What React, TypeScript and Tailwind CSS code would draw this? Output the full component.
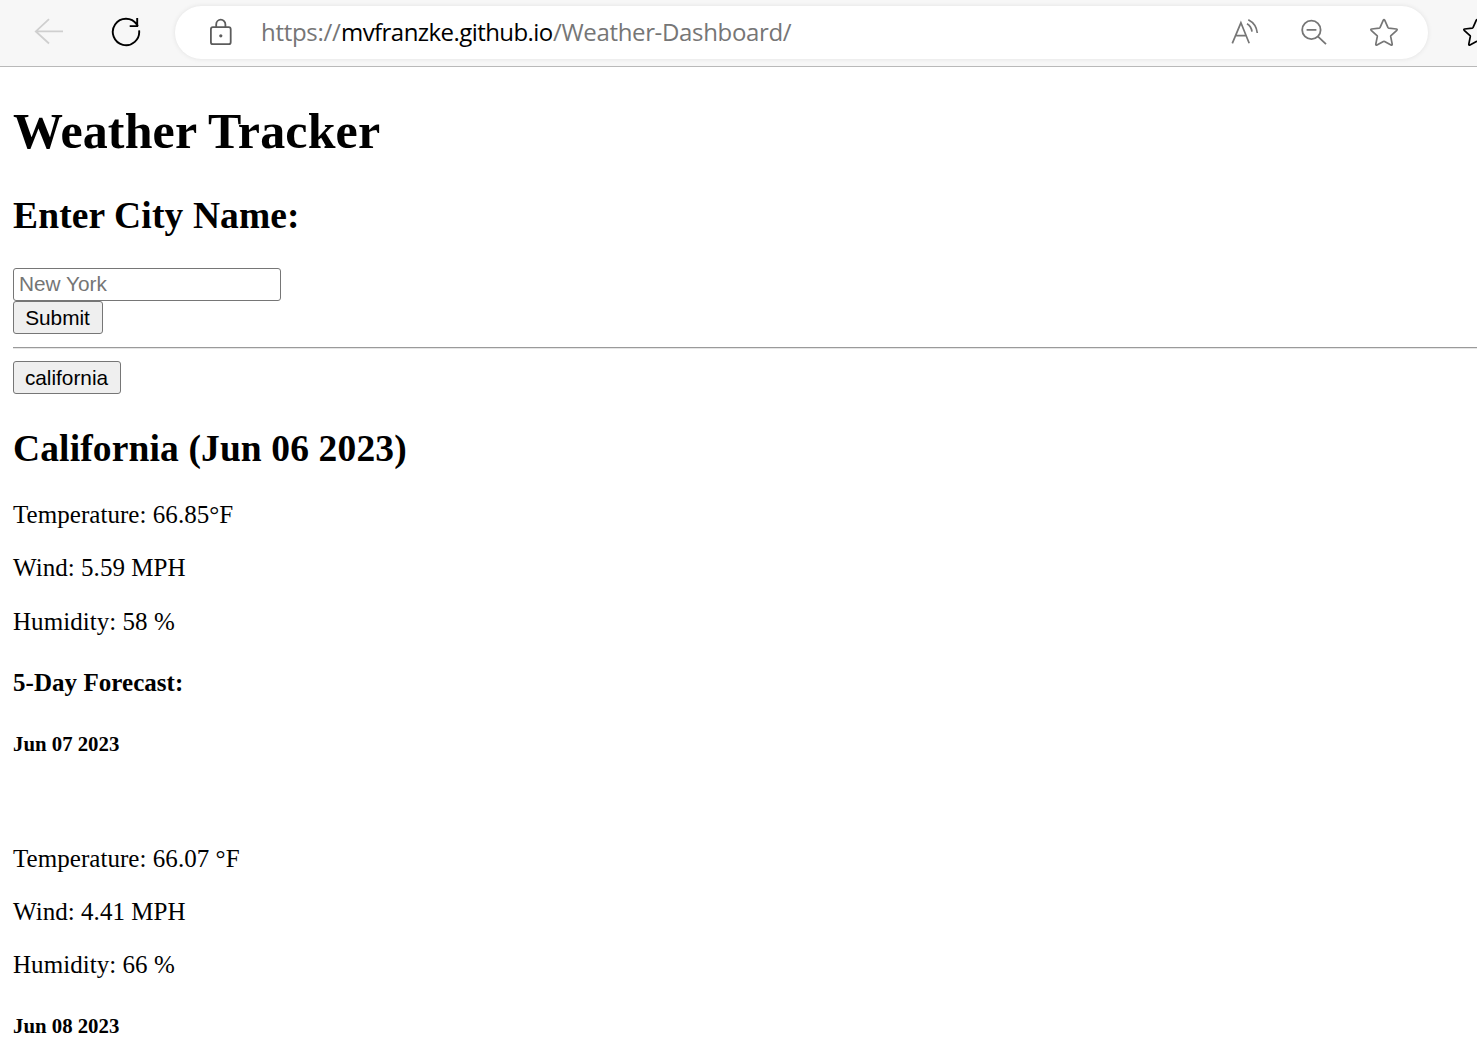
import React from "react";

const STAR =
  "M14.7 2.2 L17.9 9.4 Q18.2 10 18.8 10.1 L26.3 11 Q27.7 11.3 26.8 12.3 L21 17.7 Q20.6 18.1 20.7 18.7 L22.2 26.1 Q22.3 27.6 21 27 L14.6 23.5 Q14 23.2 13.4 23.5 L7 27 Q5.7 27.6 5.8 26.1 L7.3 18.7 Q7.4 18.1 7 17.7 L1.2 12.3 Q.3 11.3 1.7 11 L9.2 10.1 Q9.8 10 10.1 9.4 L13.3 2.2 Q14 1 14.7 2.2 Z";

function Star({ className }: { className: string }) {
  return (
    <svg viewBox="0 0 28 29" className={className} fill="none" stroke="currentColor" strokeWidth="1.7" strokeLinejoin="round">
      <path d={STAR} />
    </svg>
  );
}

function Toolbar() {
  return (
    <header className="flex h-[67px] items-start overflow-hidden border-b border-[#b9b9b9] bg-[#f7f7f7]">
      <svg viewBox="0 0 30 28" className="ml-[34px] mt-[18px] h-[28px] w-[30px] shrink-0 text-[#cfcfcf]" fill="none" stroke="currentColor" strokeWidth="1.8">
        <path d="M15 1.2 L1.8 13.4 L15 25.5 M1.8 13.4 H29" />
      </svg>
      <svg viewBox="0 0 30 30" className="ml-[47px] mt-[17px] h-[30px] w-[30px] shrink-0 text-black" fill="none" stroke="currentColor" strokeWidth="1.9">
        <path d="M28.1 13.4 A13.2 13.2 0 1 1 25.8 7.4 L27 9 M18.7 9.1 H26.2 V1" />
      </svg>
      <div className="ml-[34px] mt-[6px] flex h-[53px] w-[1253px] shrink-0 items-center rounded-full bg-white shadow-[0_0_5px_rgba(0,0,0,0.09)]">
        <svg viewBox="0 0 22 28" className="ml-[35px] -mt-[2px] h-[28px] w-[22px] shrink-0 text-[#5c5c5c]" fill="none" stroke="currentColor" strokeWidth="1.8">
          <rect x="0.9" y="9.2" width="19.8" height="17" rx="2" />
          <path d="M6.2 9 V6.5 A4.6 4.9 0 0 1 15.4 6.5 V9" />
          <circle cx="10.8" cy="17.8" r="1.6" fill="currentColor" stroke="none" />
        </svg>
        <div className="ml-[29px] flex h-[53px] whitespace-pre font-['Open_Sans','Noto_Sans',sans-serif] text-[24px] leading-[51px] text-[#767676]">
          <span className="w-[80px] tracking-[-0.3px]">https://</span>
          <span className="w-[212px] tracking-[-0.56px] text-black">mvfranzke.github.io</span>
          <span className="w-[240px] tracking-[-0.34px]">/Weather-Dashboard/</span>
        </div>
        <svg viewBox="0 0 28 28" className="ml-[438px] h-[28px] w-[28px] shrink-0 text-[#767676]" fill="none" stroke="currentColor" strokeWidth="1.7">
          <path d="M1.3 24.3 L9.9 3.8 L18.2 24.3 M4.3 16.6 H15.4" />
          <path d="M16 4.8 Q20.3 7.3 21 12.6 M17.3 0.8 Q25.4 5 26.3 14" />
        </svg>
        <svg viewBox="0 0 28 28" className="ml-[41px] h-[28px] w-[28px] shrink-0 text-[#767676]" fill="none" stroke="currentColor" strokeWidth="1.8">
          <circle cx="11.4" cy="10.9" r="9.2" />
          <path d="M6.6 10.9 H16.4 M17.8 17.4 L26 25.2" />
        </svg>
        <Star className="ml-[42px] h-[29px] w-[28px] shrink-0 text-[#767676]" />
      </div>
      <Star className="ml-[35px] mt-[18px] h-[29px] w-[28px] shrink-0 text-black" />
    </header>
  );
}

const CONTROL =
  "block h-[33px] rounded-[3px] border border-[#767676] font-['Liberation_Sans',Arial,sans-serif] text-[20.8px] leading-[31px]";

const LINE = "text-[25px] leading-[28px] tracking-[0.05px]";
const DATE = "text-[20.8px] font-bold leading-[24px]";
const SUBHEAD = "text-[37.5px] font-bold leading-[42px] tracking-[0.13px]";

export default function App() {
  return (
    <div className="h-[1041px] w-full overflow-hidden bg-white font-['Liberation_Serif','Times_New_Roman',serif] text-black">
      <Toolbar />
      <main className="pl-[13px]">
        <h1 className="mt-[36px] text-[50px] font-bold leading-[56px] tracking-[0.14px]">Weather Tracker</h1>
        <h2 className={`${SUBHEAD} mt-[36px]`}>Enter City Name:</h2>
        <input
          placeholder="New York"
          className={`${CONTROL} mt-[31px] w-[268px] bg-white px-[5px] pb-[2px] placeholder:text-[#757575] placeholder:opacity-100`}
        />
        <button className={`${CONTROL} w-[90px] bg-[#efefef] pr-px`}>Submit</button>
        <hr className="mt-[13px] h-[2px] border-0 border-t border-[#9a9a9a] bg-[#e6e6e6]" />
        <button className={`${CONTROL} mt-[12px] w-[108px] bg-[#efefef] pr-px`}>california</button>
        <h2 className={`${SUBHEAD} mt-[34px]`}>California (Jun 06 2023)</h2>
        <p className={`${LINE} mt-[31px]`}>Temperature: 66.85°F</p>
        <p className={`${LINE} mt-[25px]`}>Wind: 5.59 MPH</p>
        <p className={`${LINE} mt-[26px]`}>Humidity: 58 %</p>
        <h4 className={`${LINE} mt-[33px] font-bold`}>5-Day Forecast:</h4>
        <h5 className={`${DATE} mt-[35px]`}>Jun 07 2023</h5>
        <p className={`${LINE} mt-[89px]`}>Temperature: 66.07 °F</p>
        <p className={`${LINE} mt-[25px]`}>Wind: 4.41 MPH</p>
        <p className={`${LINE} mt-[25px]`}>Humidity: 66 %</p>
        <h5 className={`${DATE} mt-[35px]`}>Jun 08 2023</h5>
      </main>
    </div>
  );
}
